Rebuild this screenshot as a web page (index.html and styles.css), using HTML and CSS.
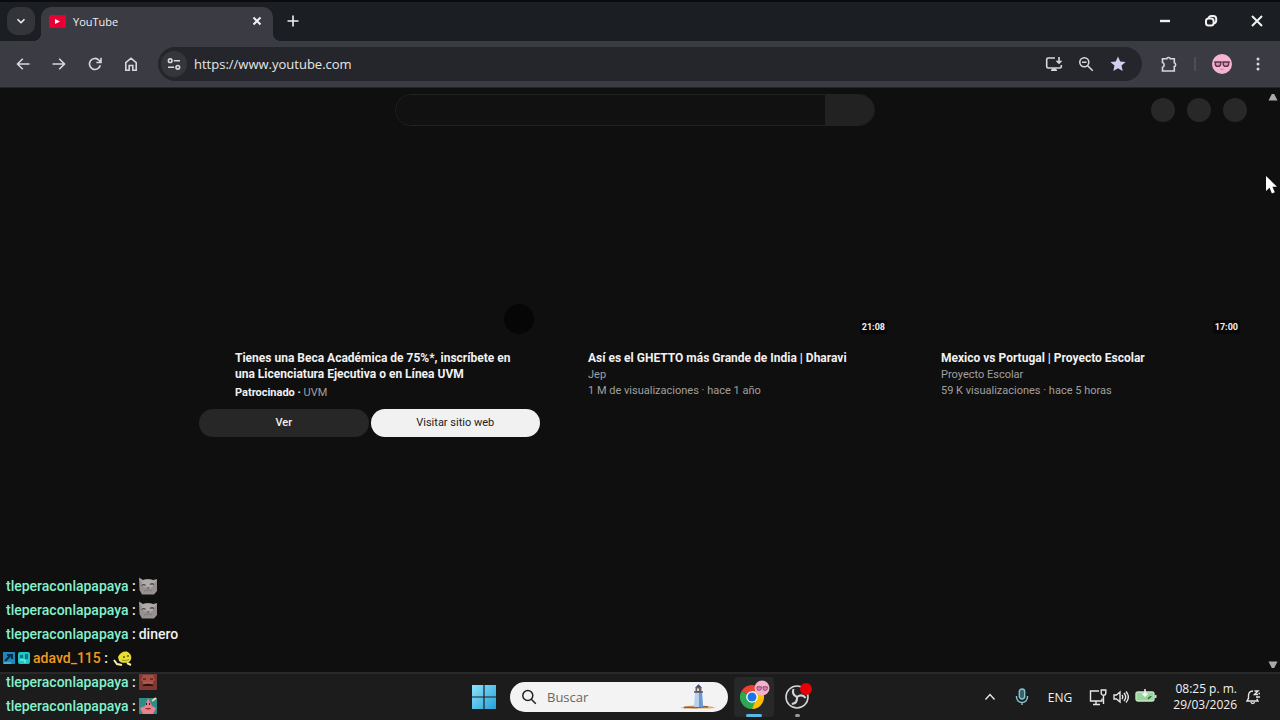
FILE: index.html
```html
<!DOCTYPE html>
<html lang="es">
  <head>
    <meta charset="UTF-8" />
    <meta name="viewport" content="width=device-width, initial-scale=1.0" />
    <title>YouTube</title>
    <link rel="stylesheet" href="styles.css">
  </head>
  <body>
    <!-- tab strip -->
    <header class="tab-strip">
      <button class="tab-search" aria-label="Buscar pestañas">
        <svg width="10" height="10" viewBox="0 0 10 10"><path d="M1.500 3.200 5 6.700l3.500-3.500" /></svg>
      </button>
      <div class="tab">
        <svg class="tab-logo" width="17" height="13" viewBox="0 0 17 13">
          <rect width="17" height="13" rx="2" fill="#e80033" />
          <path d="M6 4v5l5-2.500z" fill="#fff" />
        </svg>
        <span class="tab-title">YouTube</span>
        <button class="icon-btn tab-close" aria-label="Cerrar pestaña">
          <svg width="10" height="10" viewBox="0 0 10 10"><path d="m1.500 1.500 7 7m0-7-7 7" /></svg>
        </button>
      </div>
      <button class="icon-btn new-tab" aria-label="Nueva pestaña">
        <svg width="12" height="12" viewBox="0 0 12 12"><path d="M6 .5v11M.5 6h11" /></svg>
      </button>
      <div class="window-btns">
        <button class="icon-btn" aria-label="Minimizar">
          <svg width="12" height="12" viewBox="0 0 12 12"><path d="M1 6h10" stroke-width="2.400" /></svg>
        </button>
        <button class="icon-btn" aria-label="Restaurar">
          <svg width="14" height="14" viewBox="0 0 14 14">
            <rect x="2" y="4.400" width="7.600" height="7.200" rx="2.600" />
            <path d="M4.600 4.200C5 2.600 6 2 7.400 2h1.800c2 0 3 1 3 2.800v1.600c0 1.600-.8 2.600-2.400 2.900" />
          </svg>
        </button>
        <button class="icon-btn" aria-label="Cerrar">
          <svg width="12" height="12" viewBox="0 0 12 12"><path d="m1 1 10 10M11 1 1 11" /></svg>
        </button>
      </div>
    </header>

    <!-- toolbar -->
    <nav class="toolbar">
      <div class="nav-btns">
        <button class="icon-btn" aria-label="Atrás">
          <svg width="14" height="14" viewBox="0 0 14 14"><path d="M13.500 7H1.500m5.300-5.300L1.500 7l5.300 5.300" /></svg>
        </button>
        <button class="icon-btn" aria-label="Adelante">
          <svg width="14" height="14" viewBox="0 0 14 14"><path d="M.5 7h12M7.200 1.700 12.500 7l-5.300 5.300" /></svg>
        </button>
        <button class="icon-btn" aria-label="Volver a cargar">
          <svg width="14" height="14" viewBox="0 0 14 14"><path d="M12.300 8.200A5.500 5.500 0 1 1 11 3.200l1.800 2M13 .8v4.700H8.400" /></svg>
        </button>
        <button class="icon-btn" aria-label="Página principal">
          <svg width="14" height="14" viewBox="0 0 14 14"><path d="M1.800 5.600 7 1.200l5.200 4.400v7.600H8.800V8.500H5.200v4.700H1.800z" /></svg>
        </button>
      </div>
      <div class="address-bar">
        <button class="site-info" aria-label="Información del sitio">
          <svg width="14" height="14" viewBox="0 0 14 14">
            <circle cx="3.200" cy="3.700" r="1.800" /><path d="M6.800 3.700H13M1 10.300h6.200" /><circle cx="10.800" cy="10.300" r="1.800" />
          </svg>
        </button>
        <input class="url" type="text" value="https://www.youtube.com" aria-label="Dirección" />
        <button class="icon-btn" aria-label="Instalar">
          <svg width="18" height="16" viewBox="0 0 18 16">
            <path d="M10 2H3.200C2.200 2 1.700 2.500 1.700 3.500v7c0 1 .5 1.500 1.500 1.500h11.600c1 0 1.500-.5 1.500-1.500V9" />
            <path d="M14 1v6m-2.500-2.300L14 7.200l2.500-2.500M6 14.200h6" /><path d="M7 12.500h4v2H7z" fill="currentColor" stroke="none" />
          </svg>
        </button>
        <button class="icon-btn" aria-label="Zoom">
          <svg width="16" height="16" viewBox="0 0 16 16">
            <circle cx="6.300" cy="6.300" r="4.500" /><path d="m9.700 9.700 5 5M4 6.300h4.600" />
          </svg>
        </button>
        <button class="icon-btn star" aria-label="Favorito">
          <svg width="16" height="16" viewBox="0 0 16 16"><path d="m8 .5 2.200 5 5.400.5-4.100 3.600 1.200 5.400L8 12.200 3.300 15l1.200-5.400L.4 6l5.400-.5z" /></svg>
        </button>
      </div>
      <div class="toolbar-end">
        <button class="icon-btn" aria-label="Extensiones">
          <svg width="18" height="18" viewBox="0 0 18 18">
            <path d="M2.500 3.700h4.300c.2-1.600 3.300-1.600 3.500 0h4v4.100c1.800.4 1.800 3.400 0 3.800V16H2.500v-3.800c2.200-.8 2.200-3.800 0-4.600z" />
          </svg>
        </button>
        <span class="divider"></span>
        <button class="icon-btn" aria-label="Perfil">
          <svg width="20" height="20" viewBox="0 0 20 20">
            <circle cx="10" cy="10" r="10" fill="#f5b5d2" stroke="none" />
            <path d="M2 8h16" stroke="#6d3f55" stroke-width="1" />
            <path d="M3.200 8.200h5.500v1.500a2.700 2.700 0 0 1-5.500 0zm8 0h5.500v1.500a2.700 2.700 0 0 1-5.500 0z" fill="#dc8fb2" stroke="#55324a" stroke-width="1.300" />
            <path d="M8.500 15.200h3" stroke="#c5799c" stroke-width="1" />
          </svg>
        </button>
        <button class="icon-btn" aria-label="Más">
          <svg width="4" height="14" viewBox="0 0 4 14">
            <g fill="currentColor" stroke="none"><circle cx="2" cy="2" r="1.500" /><circle cx="2" cy="7" r="1.500" /><circle cx="2" cy="12" r="1.500" /></g>
          </svg>
        </button>
      </div>
    </nav>

    <!-- page -->
    <div class="page">
      <main class="content">
        <div class="masthead">
          <form class="search" role="search">
            <input class="search-input" type="text" aria-label="Buscar videos" />
            <button class="search-btn" type="button" aria-label="Buscar"></button>
          </form>
          <div class="masthead-end">
            <span class="circle"></span>
            <span class="circle"></span>
            <span class="circle"></span>
          </div>
        </div>

        <div class="grid">
          <article class="card">
            <div class="thumb"><span class="dot"></span></div>
            <div class="details">
              <h3 class="title">Tienes una Beca Académica de 75%*, inscríbete en una Licenciatura Ejecutiva o en Línea UVM</h3>
              <p class="meta sponsor"><b>Patrocinado ·</b> UVM</p>
            </div>
            <div class="actions">
              <button class="btn">Ver</button>
              <button class="btn btn-light">Visitar sitio web</button>
            </div>
          </article>
          <article class="card">
            <div class="thumb"><span class="time">21:08</span></div>
            <div class="details">
              <h3 class="title">Así es el GHETTO más Grande de India | Dharavi</h3>
              <p class="meta">Jep</p>
              <p class="meta">1 M de visualizaciones · hace 1 año</p>
            </div>
          </article>
          <article class="card">
            <div class="thumb"><span class="time">17:00</span></div>
            <div class="details">
              <h3 class="title">Mexico vs Portugal | Proyecto Escolar</h3>
              <p class="meta">Proyecto Escolar</p>
              <p class="meta">59 K visualizaciones · hace 5 horas</p>
            </div>
          </article>
        </div>
      </main>
      <div class="scrollbar">
        <svg width="10" height="8" viewBox="0 0 10 8"><path d="M3.800 1h2.400L9.500 7.500h-9z" /></svg>
        <svg width="10" height="8" viewBox="0 0 10 8"><path d="M.5.5h9L6.200 7H3.800z" /></svg>
      </div>
    </div>

    <!-- taskbar -->
    <footer class="taskbar">
      <div class="task-center">
        <button class="icon-btn" aria-label="Inicio">
          <svg width="24" height="24" viewBox="0 0 24 24">
            <defs>
              <linearGradient id="win" x1="0" y1="0" x2="1" y2="1">
                <stop offset="0" stop-color="#8be4fb" /><stop offset="1" stop-color="#269fda" />
              </linearGradient>
            </defs>
            <path d="M0 0h11.400v11.400H0zm12.600 0H24v11.400H12.600zM0 12.600h11.400V24H0zm12.600 0H24V24H12.600z" fill="url(#win)" stroke="none" />
          </svg>
        </button>
        <label class="task-search">
          <svg width="16" height="16" viewBox="0 0 16 16"><circle cx="6.800" cy="6.500" r="5" /><path d="m10.300 10.300 4.500 4.500" /></svg>
          <input type="text" placeholder="Buscar" aria-label="Buscar" />
          <svg class="lighthouse" width="36" height="26" viewBox="0 0 36 26">
            <path d="M0 24c6-2 11-2.500 18-2.500s13 .5 18 2.500c-9 .800-26 .800-36 0z" fill="#e6ac68" />
            <path d="M4 23.500c6-1 9 .500 13 0s7-1 11-.500" stroke="#8a5a3a" fill="none" />
            <path d="M15 8h7l1 15h-9z" fill="#b6d0ee" />
            <path d="M19 8h3l1 15h-4z" fill="#6c97d0" />
            <path d="M15.500 3.500h6V8h-6z" fill="#6b6270" />
            <path d="M17 4.500h2V7h-2z" fill="#f3d9a0" />
            <path d="m15 3.800 3.500-3.500L22 3.800z" fill="#3f4b66" />
            <path d="M14 8h9" stroke="#46536e" />
          </svg>
        </label>
        <button class="task-app active" aria-label="Google Chrome">
          <svg width="32" height="34" viewBox="0 0 32 34">
            <path d="M14 17 3.600 11a12 12 0 0 1 20.800 0z" fill="#e94235" />
            <path d="M14 17 3.600 11A12 12 0 0 0 14 29l6-10z" fill="#2da94f" />
            <path d="M14 17h5l-5 12a12 12 0 0 0 10.400-18H14z" fill="#fdbd00" />
            <circle cx="14" cy="17" r="5.800" fill="#fff" /><circle cx="14" cy="17" r="4.500" fill="#1b73e8" />
            <circle cx="24" cy="8" r="7.500" fill="#f5b0cb" />
            <path d="M19 6.800h4.300v1.500a2.100 2.100 0 0 1-4.300 0zm6 0h4.300v1.500a2.100 2.100 0 0 1-4.300 0z" fill="#d981a8" stroke="#8a4f70" />
          </svg>
        </button>
        <button class="task-app" aria-label="OBS Studio">
          <svg width="32" height="34" viewBox="0 0 32 34">
            <circle cx="16" cy="17" r="11" fill="#242326" stroke="#d5d5d5" stroke-width="1.600" />
            <!-- three blades -->
            <g fill="none" stroke="#d5d5d5" stroke-width="2">
              <path id="blade" d="M16 17c-3.500-1.500-5-4-3.500-8" />
              <path d="M16 17c-3.500-1.500-5-4-3.500-8" transform="rotate(120 16 17)" />
              <path d="M16 17c-3.500-1.500-5-4-3.500-8" transform="rotate(240 16 17)" />
            </g>
            <circle cx="25" cy="9" r="6" fill="#e80008" />
          </svg>
        </button>
      </div>
      <div class="tray">
        <svg width="12" height="8" viewBox="0 0 12 8"><path d="m1.500 6.500 4.500-5 4.500 5" /></svg>
        <svg class="mic" width="14" height="18" viewBox="0 0 14 18">
          <rect x="4.300" y="1" width="5.400" height="10" rx="2.700" fill="#37626b" /><path d="M1.500 8v1a5.500 5.500 0 0 0 11 0V8M7 14.500V17" />
        </svg>
        <span class="lang">ENG</span>
        <div class="status">
          <svg width="18" height="18" viewBox="0 0 18 18">
            <path d="M10 3H1.500v10H13v-2.500M7 13v3M4 16.500h7" />
            <path d="M12.200 2h4.600v3a2.300 2.300 0 0 1-4.600 0zM14.500 7.500V16" />
          </svg>
          <svg width="16" height="14" viewBox="0 0 16 14">
            <path d="M1 5v4h2.500L7 12V2L3.500 5zM9 5c1 1.300 1 2.700 0 4m2-6c2.200 2.600 2.200 5.400 0 8m2-9.500c3 3.500 3 7.500 0 11" />
          </svg>
          <svg width="22" height="16" viewBox="0 0 22 16">
            <rect x="1" y="3" width="18" height="9" rx="2" fill="#9bd59d" stroke="#c3e7c1" />
            <path d="M20.500 6v3" stroke="#c3e7c1" stroke-width="2" />
            <path d="M10 0v6M7.500 4.500 10 7l2.500-2.500" stroke="#fff" /><path d="M13 10c1-2 3-2 3-3" stroke="#2f6b38" />
          </svg>
        </div>
        <div class="clock"><span>08:25 p. m.</span><span>29/03/2026</span></div>
        <svg width="16" height="16" viewBox="0 0 16 16">
          <path d="M8 2C5 2 3.500 4 3.500 6.500v2.700L2 12h11l-1.200-2.300M6 13c.3 2 3.200 2 3.500 0" /><path d="M9.500 2H13L9.500 5.500H13M11 8h4M13.500 4.500H15" />
        </svg>
      </div>
    </footer>

    <!-- chat over the screen -->
    <ul class="chat">
      <li>
        <span><b class="user">tleperaconlapapaya</b> :</span>
        <svg width="18" height="18" viewBox="0 0 18 18">
          <g id="cat">
            <path d="M0 .5 4 3c3-1.200 7-1 10 0l4-1v12l-3 3.500H3L.5 13z" fill="#96918f" />
            <path d="M4 3c3-1 7-1 10 0l2 4-4 4H7L2 8z" fill="#b0abaa" />
            <path d="M2.500 8.500c1.500-1.200 3-1 4 0m4.500-1c1.500-1 3-.8 4 .2" stroke="#4e4a4c" stroke-width="1.300" fill="none" />
            <path d="M7 10h4l-2 2z" fill="#777173" />
            <path d="M5 14.500c2-2 6-2 8 0" stroke="#7d7778" fill="none" />
            <path d="m1 2 2 2.500M17 3l-2 2" stroke="#c4bfbe" />
          </g>
        </svg>
      </li>
      <li>
        <span><b class="user">tleperaconlapapaya</b> :</span>
        <svg width="18" height="18" viewBox="0 0 18 18"><use href="#cat" /></svg>
      </li>
      <li><span><b class="user">tleperaconlapapaya</b> :</span> <span>dinero</span></li>
      <li class="with-badges">
        <svg width="12" height="12" viewBox="0 0 12 12">
          <path d="M0 0h12v12H0z" fill="#1b87bd" /><path d="M2 9 8 3M4 3h5v4" stroke="#092b49" stroke-width="2" fill="none" /><path d="M1 11h7" stroke="#70d3ec" />
        </svg>
        <svg width="12" height="12" viewBox="0 0 12 12">
          <rect width="12" height="12" rx="2" fill="#20c6c6" /><path d="M2 3h3v3H2zm5-1h3v5H7z" fill="#0a7686" /><path d="M2 8h5v3" stroke="#83fff2" fill="none" />
        </svg>
        <span><b class="user orange">adavd_115</b> :</span>
        <svg class="fish" width="20" height="18" viewBox="0 0 20 18">
          <path d="M5 8c2-5 8-7 11-4 3 2 3 7 0 9-3 1.500-8 1-10-1z" fill="#e8de30" /><path d="m1 11 3 4 5 1M14 14l4 2" stroke="#f2f0ae" stroke-width="2" fill="none" />
          <path d="M10 8h2M14 7h2" stroke="#5a551a" stroke-width="1.500" /><path d="M9 11c2 1 5 .500 7-.500" stroke="#9a9118" fill="none" />
        </svg>
      </li>
      <li>
        <span><b class="user">tleperaconlapapaya</b> :</span>
        <svg width="18" height="18" viewBox="0 0 18 18">
          <path d="M0 1h18v16H0z" fill="#7d3a35" /><path d="M4 2h10l2 5-3 3H5L2 7z" fill="#a84e45" />
          <path d="M4 6h3m4 0h3" stroke="#5a2522" stroke-width="1.500" /><path d="M3 13c3-3 9-3 12 0z" fill="#251214" /><path d="M4 10h10" stroke="#c86a5c" />
        </svg>
      </li>
      <li>
        <span><b class="user">tleperaconlapapaya</b> :</span>
        <svg width="18" height="18" viewBox="0 0 18 18">
          <path d="M0 1h18v16H0z" fill="#2c8c89" /><path d="m9 1 4 8 4 2-3 6H4l-3-6 5-2z" fill="#e98289" />
          <path d="M7 7h1m2 0h1" stroke="#341c2e" stroke-width="2" /><path d="M6 11c2 2 5 2 6 0z" fill="#872f45" /><path d="m13 4 4-3" stroke="#f5d2a7" stroke-width="2" />
        </svg>
      </li>
    </ul>

    <svg class="cursor" width="14" height="20" viewBox="0 0 14 20">
      <path d="M1 1v15l3.500-3.200 2.400 5.700 2.900-1.200-2.400-5.600H12z" fill="#fff" />
    </svg>
  </body>
</html>
```
FILE: styles.css
```css
* {
  box-sizing: border-box;
}
body {
  margin: 0;
  height: 100vh;
  display: flex;
  flex-direction: column;
  overflow: hidden;
  background-color: #0f0f0f;
  color: #f1f1f1;
  font-family: Roboto, "Liberation Sans", sans-serif;
}
svg {
  display: block;
  flex: none;
}
button,
input {
  font: inherit;
  color: inherit;
  border: none;
  outline: none;
  padding: 0;
  background: none;
}
.icon-btn,
.tab-search,
.site-info {
  display: flex;
  align-items: center;
  justify-content: center;
  flex: none;
  width: 32px;
  height: 32px;
  fill: none;
  stroke: currentColor;
  stroke-width: 1.6;
}

/* ---- tab strip ---- */
.tab-strip {
  display: flex;
  align-items: center;
  height: 41px;
  flex: none;
  padding: 0 0 0 7px;
  background-color: #1b1e23;
  box-shadow: inset 0 2px #0b0c0f;
  font-family: "Open Sans", sans-serif;
}
.tab-search {
  width: 28px;
  height: 28px;
  border-radius: 10px;
  background-color: #33353b;
}
.tab {
  position: relative;
  display: flex;
  align-items: center;
  width: 232px;
  height: 34px;
  margin-left: 6px;
  padding-left: 8px;
  align-self: flex-end;
  padding-bottom: 6px;
  border-radius: 10px 10px 0 0;
  background-color: #3a3b43;
  font-size: 11px;
}
.tab::before,
.tab::after {
  content: "";
  position: absolute;
  bottom: 0;
  width: 8px;
  height: 8px;
}
.tab::before {
  right: 100%;
  background: radial-gradient(circle at 0 0, transparent 8px, #3a3b43 8px);
}
.tab::after {
  left: 100%;
  background: radial-gradient(circle at 100% 0, transparent 8px, #3a3b43 8px);
}
.tab-title {
  flex: 1;
  margin-left: 7px;
}
.tab-close {
  stroke-width: 2;
}
.new-tab {
  margin-left: 4px;
}
.window-btns {
  display: flex;
  margin-left: auto;
}
.window-btns .icon-btn {
  width: 46px;
  stroke-width: 2;
}

/* ---- toolbar ---- */
.toolbar {
  display: flex;
  align-items: center;
  height: 47px;
  flex: none;
  padding: 0 6px 0 7px;
  background-color: #3a3b43;
  border-bottom: 1px solid #24252a;
  color: #d8d8dc;
}
.nav-btns {
  display: flex;
  gap: 4px;
}
.address-bar {
  display: flex;
  align-items: center;
  flex: 1;
  height: 34px;
  margin-left: 11px;
  padding: 0 8px 0 3px;
  border-radius: 17px;
  background-color: #24262b;
}
.site-info {
  width: 26px;
  height: 26px;
  border-radius: 50%;
  background-color: #34363c;
}
.url {
  flex: 1;
  min-width: 0;
  margin-left: 7px;
  color: #e6e6e8;
  font-family: "Open Sans", sans-serif;
  font-size: 13px;
}
.star {
  fill: #cfd0ee;
  stroke: none;
}
.toolbar-end {
  display: flex;
  align-items: center;
  margin-left: 11px;
}
.toolbar-end .icon-btn:last-child {
  margin-left: 4px;
}
.divider {
  width: 2px;
  height: 14px;
  margin: 0 10px 0 9px;
  background-color: #4b4c56;
}

/* ---- page ---- */
.page {
  display: flex;
  flex: 1;
  min-height: 0;
}
.content {
  flex: 1;
}
.masthead {
  display: grid;
  grid-template-columns: 1fr 480px 1fr;
  align-items: center;
  height: 43px;
  padding: 0 18px 0 22px;
}
.search {
  grid-column: 2;
  display: flex;
  height: 32px;
  border: 1px solid #222;
  border-radius: 16px;
  overflow: hidden;
}
.search-input {
  flex: 1;
  padding: 0 16px;
  background-color: #111;
}
.search-btn {
  width: 49px;
  background-color: #222;
}
.masthead-end {
  display: flex;
  justify-content: flex-end;
  gap: 12px;
}
.circle {
  width: 24px;
  height: 24px;
  border-radius: 50%;
  background-color: #282828;
}
.grid {
  display: grid;
  grid-template-columns: repeat(3, 1fr);
  gap: 12px;
  margin: 17px 19px 0 199px;
}
.thumb {
  display: flex;
  justify-content: flex-end;
  align-items: flex-end;
  aspect-ratio: 16 / 9;
  padding: 6px;
}
.dot {
  width: 30px;
  height: 30px;
  border-radius: 50%;
  background-color: #060606;
}
.time {
  padding: 0 2px;
  border-radius: 3px;
  background-color: #080808;
  font-size: 9px;
  font-weight: 700;
  line-height: 14px;
}
.details {
  padding: 10px 24px 0 36px;
}
.title {
  margin: 0 0 1px;
  font-size: 12px;
  font-weight: 700;
  line-height: 16px;
}
.meta {
  margin: 0;
  color: #a0a0a0;
  font-size: 11px;
  line-height: 16px;
}
.meta b {
  color: #f1f1f1;
}
.sponsor {
  margin-top: 3px;
}
.actions {
  display: flex;
  gap: 2px;
  margin-top: 8px;
}
.btn {
  flex: 1;
  height: 28px;
  border-radius: 14px;
  background-color: #272727;
  font-size: 11px;
  font-weight: 500;
}
.btn-light {
  background-color: #f1f1f1;
  color: #1c1c1c;
  font-weight: 400;
}
.scrollbar {
  display: flex;
  flex-direction: column;
  justify-content: space-between;
  align-items: center;
  width: 15px;
  padding: 5px 0 3px;
  fill: #aaa;
}

/* ---- taskbar ---- */
.taskbar {
  display: grid;
  grid-template-columns: 1fr auto 1fr;
  align-items: center;
  height: 48px;
  flex: none;
  padding-left: 8px;
  background-color: #1c1c1c;
  border-top: 2px solid #292929;
  font-family: "Open Sans", sans-serif;
}
.task-center {
  grid-column: 2;
  display: flex;
  align-items: center;
}
.task-search {
  display: flex;
  align-items: center;
  width: 218px;
  height: 30px;
  margin: 0 6px 0 10px;
  padding: 0 12px 0 11px;
  border-radius: 15px;
  background-color: #f3f3f3;
  color: #333;
  fill: none;
  stroke: #222;
  stroke-width: 1.5;
}
.task-search input {
  flex: 1;
  min-width: 0;
  margin-left: 10px;
  font-size: 13px;
}
.task-search input::placeholder {
  color: #666;
  opacity: 1;
}
.lighthouse {
  stroke: none;
}
.task-app {
  display: flex;
  flex-direction: column;
  align-items: center;
  justify-content: flex-end;
  width: 40px;
  height: 40px;
  border-radius: 4px;
  margin-right: 3px;
}
.task-app::after {
  content: "";
  width: 5px;
  height: 3px;
  border-radius: 2px;
  background-color: #999;
}
.task-app.active {
  background-color: #272828;
}
.task-app.active::after {
  width: 16px;
  background-color: #59b9e5;
}
.tray {
  display: flex;
  align-items: center;
  justify-content: flex-end;
  padding-right: 19px;
  fill: none;
  stroke: #e6e6e6;
  stroke-width: 1.4;
  font-size: 12px;
}
.mic {
  margin-left: 19px;
  stroke: #86c4cc;
}
.lang {
  margin: 0 17px 0 19px;
}
.status {
  display: flex;
  align-items: center;
  gap: 6px;
}
.clock {
  display: flex;
  flex-direction: column;
  align-items: flex-end;
  margin: 0 8px 0 16px;
  line-height: 16px;
}

/* ---- chat ---- */
.chat {
  position: absolute;
  left: 0;
  bottom: 2px;
  margin: 0;
  padding: 0 0 0 6px;
  list-style: none;
  font-size: 14px;
  font-weight: 500;
}
.chat li {
  display: flex;
  align-items: center;
  gap: 3px;
  height: 24px;
}
.chat .with-badges {
  margin-left: -3px;
}
.fish {
  margin-left: 2px;
}
.user {
  color: #86f0cc;
  font-weight: 500;
}
.user.orange {
  color: #ef9a22;
}

.cursor {
  position: absolute;
  top: 175px;
  right: 1px;
}
```
